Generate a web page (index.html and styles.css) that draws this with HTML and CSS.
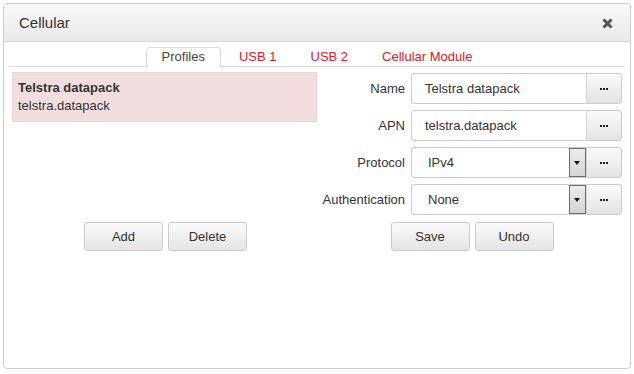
FILE: index.html
```html
<!DOCTYPE html>
<html lang="en">
<head>
  <meta charset="UTF-8" />
  <title>Cellular</title>
  <link rel="stylesheet" href="styles.css">
</head>
<body>
<div class="window">
  <div class="header">
    <span class="title">Cellular</span>
    <span class="close">
      <svg width="11" height="11" viewBox="0 0 11 11"><path d="M1.5 1.5 L9.5 9.5 M9.5 1.5 L1.5 9.5" stroke="#555" stroke-width="3"/></svg>
    </span>
  </div>
  <ul class="tabs">
    <li class="tab active">Profiles</li>
    <li class="tab">USB 1</li>
    <li class="tab">USB 2</li>
    <li class="tab">Cellular Module</li>
  </ul>
  <div class="panes">
    <div class="list">
      <div class="item selected">
        <div class="item-name">Telstra datapack</div>
        <div class="item-apn">telstra.datapack</div>
      </div>
    </div>
    <div class="form">
      <label class="label">Name</label>
      <div class="field">
        <div class="box">Telstra datapack</div>
        <span class="more"><i></i><i></i><i></i></span>
      </div>
      <label class="label">APN</label>
      <div class="field">
        <div class="box">telstra.datapack</div>
        <span class="more"><i></i><i></i><i></i></span>
      </div>
      <label class="label">Protocol</label>
      <div class="field">
        <div class="box select">IPv4<span class="arrow"></span></div>
        <span class="more"><i></i><i></i><i></i></span>
      </div>
      <label class="label">Authentication</label>
      <div class="field">
        <div class="box select">None<span class="arrow"></span></div>
        <span class="more"><i></i><i></i><i></i></span>
      </div>
    </div>
    <div class="buttons">
      <button class="btn">Add</button>
      <button class="btn">Delete</button>
    </div>
    <div class="buttons">
      <button class="btn">Save</button>
      <button class="btn">Undo</button>
    </div>
  </div>
</div>
</body>
</html>
```

FILE: styles.css
```css
body {
    margin: 0;
    background: #fff;
    font-family: "Liberation Sans", Arial, sans-serif;
    font-size: 13px;
    color: #333;
}

.window {
    margin: 3px;
    width: 628px;
    height: 366px;
    box-sizing: border-box;
    border: 1px solid #cfcfcf;
    border-radius: 4px;
    overflow: hidden;
}

.header {
    height: 37px;
    display: flex;
    align-items: center;
    justify-content: space-between;
    padding: 0 17px 0 15px;
    background: linear-gradient(#f9f9f9, #e9e9e9);
    border-bottom: 1px solid #d9d9d9;
}
.title {
    font-size: 15px;
    color: #333;
}
.close {
    display: flex;
    padding-top: 1px;
}

.tabs {
    list-style: none;
    margin: 5px 5px 0;
    padding: 0;
    display: flex;
    justify-content: center;
    border-bottom: 1px solid #ddd;
}
.tab {
    padding: 0 15px;
    margin: 0 1px -1px;
    height: 18px;
    line-height: 17px;
    color: #d6202a;
    border: 1px solid transparent;
    border-bottom: none;
}
.tab.active {
    color: #444;
    background: #fff;
    border-color: #ddd;
    border-radius: 4px 4px 0 0;
    height: 19px;
}

.panes {
    display: grid;
    grid-template-columns: 305px 300px;
    column-gap: 5px;
    row-gap: 7px;
    padding: 5px 8px 0;
}

.item {
    padding: 7px 6px 7px;
    line-height: 18px;
}
.item.selected {
    background: #f2dede;
    border: 1px solid #e3d6d6;
    padding: 6px 5px 6px;
}
.item-name {
    font-weight: bold;
}

.form {
    display: grid;
    grid-template-columns: 83px 211px;
    column-gap: 6px;
    row-gap: 6px;
    padding-top: 1px;
    align-items: center;
}
.label {
    text-align: right;
    color: #333;
}
.field {
    display: flex;
    height: 31px;
}
.box {
    position: relative;
    flex: 1;
    box-sizing: border-box;
    border: 1px solid #ccc;
    border-right-color: #d6d6d6;
    border-radius: 4px 0 0 4px;
    padding-left: 13px;
    line-height: 29px;
    background: #fff;
}
.select {
    padding-left: 16px;
}
.arrow {
    position: absolute;
    top: 0;
    right: 0;
    width: 17px;
    height: 29px;
    box-sizing: border-box;
    border: 1px solid #6d6d6d;
    background: linear-gradient(#ececec, #d4d4d4);
}
.arrow::after {
    content: "";
    position: absolute;
    left: 4px;
    top: 12px;
    border-left: 3px solid transparent;
    border-right: 3px solid transparent;
    border-top: 4px solid #111;
}
.more {
    width: 35px;
    box-sizing: border-box;
    border: 1px solid #ccc;
    border-left: none;
    border-radius: 0 4px 4px 0;
    background: linear-gradient(#fbfbfb, #e3e3e3);
    display: flex;
    align-items: center;
    justify-content: center;
    gap: 1px;
}
.more i {
    width: 2px;
    height: 2px;
    background: #222;
}

.buttons {
    display: flex;
    justify-content: center;
    gap: 5px;
}
.buttons:nth-child(3) {
    padding-left: 2px;
}
.btn {
    width: 79px;
    height: 29px;
    border: 1px solid #ccc;
    border-radius: 3px;
    background: linear-gradient(#fbfbfb, #e4e4e4);
    font-family: "Liberation Sans", Arial, sans-serif;
    font-size: 13px;
    color: #333;
    padding: 0;
}
```
